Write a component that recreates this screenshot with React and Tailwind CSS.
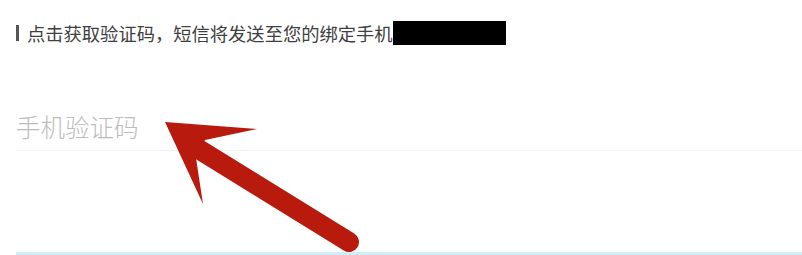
import React from 'react';

const cjk = { fontFamily: '"Noto Sans CJK SC", "Noto Sans", sans-serif' };

const Arrow = () => (
    <svg
        className="absolute left-0 top-0 pointer-events-none"
        width="802"
        height="255"
        viewBox="0 0 802 255"
    >
        <line x1="200" y1="150" x2="349" y2="242" stroke="#b81a0e" strokeWidth="20" strokeLinecap="round" />
        <polygon points="165,122 257,129 205,140 196,158 203,204" fill="#b81a0e" />
    </svg>
);

const App = () => {
    return (
        <div className="relative w-[802px] h-[255px] bg-white overflow-hidden pl-4" style={cjk}>
            <div className="h-[66px] flex items-center">
                <div className="w-[3px] h-[16px] bg-[#555555] mr-[8px]" />
                <span className="text-[18.3px] text-[#404040] leading-none">
                    点击获取验证码，短信将发送至您的绑定手机
                </span>
                <div className="w-[113px] h-[24px] bg-black" />
            </div>

            <div className="mt-[38px] h-[47px] flex items-center border-b border-[#f2f2f2]">
                <span className="text-[24.5px] font-light text-[#bdbdbd] leading-none">手机验证码</span>
            </div>

            <div className="h-[101px]" />
            <div className="h-[3px] bg-[#cfeefb]" />

            <Arrow />
        </div>
    );
};

export default App;
